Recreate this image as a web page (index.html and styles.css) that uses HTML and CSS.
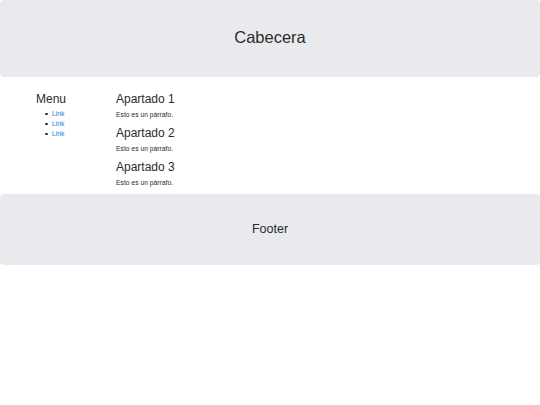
FILE: index.html
```html
<!DOCTYPE html>
<html>
  <head>
    <meta name="viewport" content="width=device-width, initial-scale=1" />
    <title>Maqueta</title>
    <link rel="stylesheet" href="styles.css">
  </head>
  <body>
    <header class="cabecera">Cabecera</header>
    <div class="contenido">
      <nav class="menu">
        <h2>Menu</h2>
        <ul>
          <li><a href="#">Link</a></li>
          <li><a href="#">Link</a></li>
          <li><a href="#">Link</a></li>
        </ul>
      </nav>
      <main class="principal">
        <section>
          <h2>Apartado 1</h2>
          <p>Esto es un párrafo.</p>
        </section>
        <section>
          <h2>Apartado 2</h2>
          <p>Esto es un párrafo.</p>
        </section>
        <section>
          <h2>Apartado 3</h2>
          <p>Esto es un párrafo.</p>
        </section>
      </main>
    </div>
    <footer class="pie">Footer</footer>
  </body>
</html>
```

FILE: styles.css
```css
/* Base */
body {
  margin: 0;
  font-family: "Liberation Sans", Arial, sans-serif;
  color: #2b2b2b;
}
h2 {
  margin: 0;
  font-size: 12px;
  line-height: 14px;
  font-weight: normal;
}
a {
  color: #1a7ae6;
  text-decoration: none;
}

/* Cabecera y pie */
.cabecera,
.pie {
  display: flex;
  align-items: center;
  justify-content: center;
  box-sizing: border-box;
  background: #e9eaed;
  border-radius: 4px;
}
.cabecera {
  height: 77px;
  padding-bottom: 2px;
  font-size: 16.5px;
}
.pie {
  height: 71px;
  padding-bottom: 2px;
  font-size: 12.5px;
}

/* Contenido: menu + apartados */
.contenido {
  display: grid;
  grid-template-columns: 80px 1fr;
  padding: 15px 36px 7px;
}
.menu h2 {
  margin-bottom: 3px;
}
.menu ul {
  margin: 0;
  padding-left: 16px;
  list-style: none;
}
.menu li {
  font-size: 6.75px;
  line-height: 10px;
}
/* bullet pegado al texto, como en el original */
.menu li::before {
  content: '';
  display: inline-block;
  width: 2.5px;
  height: 2.5px;
  margin: 0 4.5px 0 -7px;
  border-radius: 50%;
  background: currentColor;
  vertical-align: middle;
}
.principal {
  display: flex;
  flex-direction: column;
  gap: 7px;
}
.principal h2 {
  margin-bottom: 5px;
}
.principal p {
  margin: 0;
  font-size: 6.75px;
  line-height: 8px;
}
```
